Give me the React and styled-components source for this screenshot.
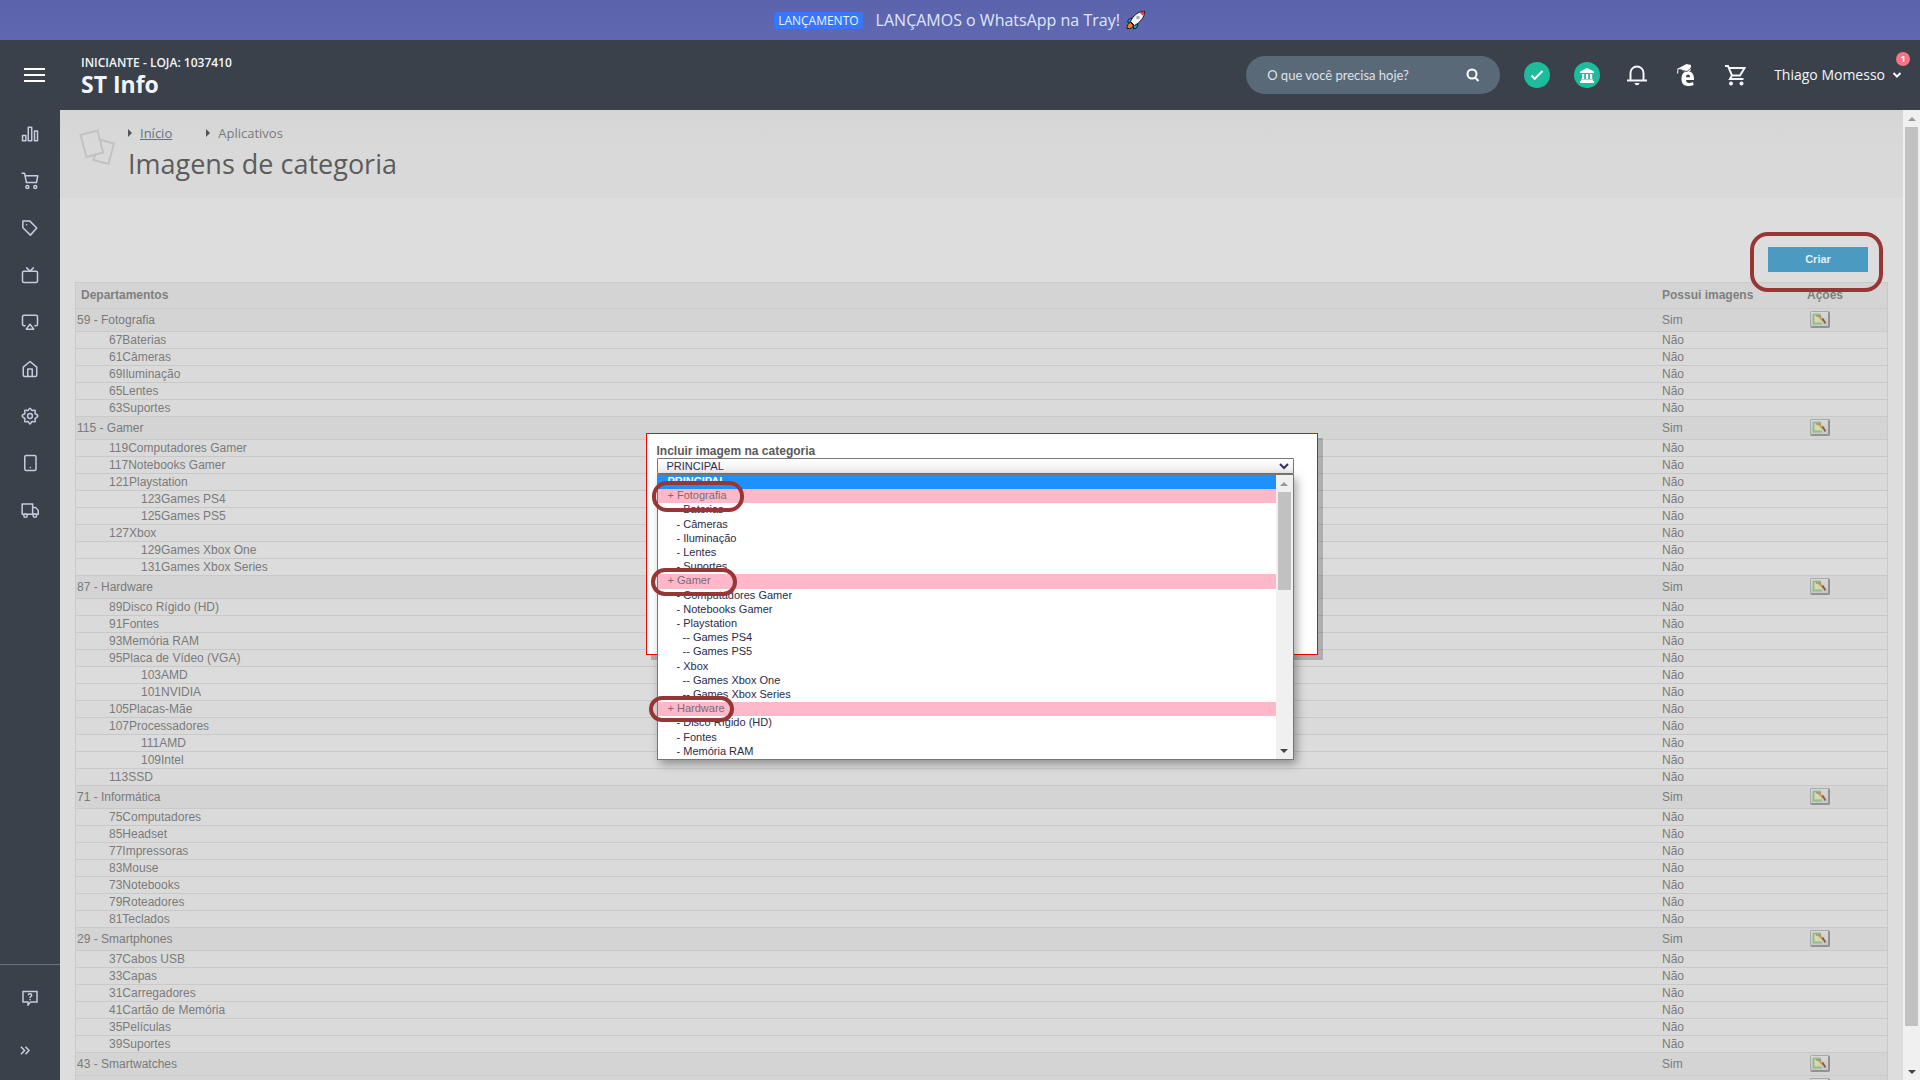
import React from "react";
import styled, { createGlobalStyle, css } from "styled-components";

const ui = `"Lato", "Open Sans", sans-serif`;
const arial = `"Liberation Sans", Arial, sans-serif`;
const open = `"Open Sans", "Noto Sans", sans-serif`;

const GlobalStyle = createGlobalStyle`
  *, *::before, *::after { box-sizing: border-box; }
  body { margin: 0; font-family: ${arial}; background: #ddd; }
  button, input, select { font: inherit; color: inherit; margin: 0; }
  button { cursor: pointer; }
`;

const Page = styled.div`
  display: flex;
  flex-direction: column;
  height: 100vh;
  overflow: hidden;
`;

/* Announcement strip */
const Banner = styled.div`
  flex: none;
  height: 40px;
  display: flex;
  align-items: center;
  justify-content: center;
  background: linear-gradient(#5c63ae, #6068b0);
  color: #dfe6fb;
  font: 500 16px/20px ${open};
  svg { margin-left: 6px; }
`;
const BannerTag = styled.span`
  margin-right: 13px;
  padding: 0 4px;
  border-radius: 3px;
  background: #3578fc;
  color: #eef3ff;
  font: 400 12px/17px ${open};
`;

/* Top bar */
const TopBar = styled.header`
  flex: none;
  height: 70px;
  display: flex;
  align-items: center;
  padding: 0 18px 0 24px;
  background: #3a414a;
  color: #f2f5f9;
  font-family: ${ui};
`;
const IconButton = styled.button`
  display: flex;
  align-items: center;
  justify-content: center;
  padding: 0;
  border: 0;
  background: none;
  color: ${(p) => p.$color || "#f2f5f9"};
`;
const Store = styled.div`
  margin-left: 36px;
  flex: 1;
`;
const StorePlan = styled.div`
  font: 600 12px/18px ${open};
`;
const StoreName = styled.div`
  font: 700 23px/24px ${open};
`;
const Search = styled.form`
  display: flex;
  align-items: center;
  width: 254px;
  height: 38px;
  padding: 0 20px 0 21px;
  border-radius: 19px;
  background: #5a6978;
  color: #dde2e8;
`;
const SearchInput = styled.input`
  flex: 1;
  min-width: 0;
  padding: 0;
  border: 0;
  outline: 0;
  background: none;
  font: 400 13px/20px ${ui};
  &::placeholder { color: #dde2e8; opacity: 1; }
`;
const Actions = styled.div`
  display: flex;
  align-items: center;
  gap: 24px;
  margin: 0 28px 0 24px;
`;
const ActionButton = styled(IconButton)`
  width: 26px;
  height: 26px;
`;
const RoundButton = styled(ActionButton)`
  border-radius: 50%;
  background: #1dbc9c;
  color: #fff;
`;
const UserButton = styled(IconButton)`
  position: relative;
  gap: 7px;
  font: 400 14px/20px ${open};
`;
const Badge = styled.span`
  position: absolute;
  right: -8px;
  top: -13px;
  width: 14px;
  height: 14px;
  border-radius: 50%;
  background: #f67485;
  color: #fff;
  font: 700 9px/14px ${open};
  text-align: center;
`;

/* Body */
const Body = styled.div`
  flex: 1;
  min-height: 0;
  display: flex;
`;
const SideBar = styled.nav`
  flex: none;
  width: 60px;
  display: flex;
  flex-direction: column;
  background: #3a414a;
`;
const SideLink = styled.a`
  flex: none;
  display: flex;
  align-items: center;
  justify-content: center;
  height: 47px;
  color: #c5ccde;
`;
const SideFoot = styled.div`
  margin-top: auto;
  border-top: 1px solid #6b727b;
  padding: 9px 0 1px;
`;
const FootLink = styled(SideLink)`
  height: ${(p) => p.$h}px;
  padding-right: ${(p) => p.$shift || 0}px;
`;
const Content = styled.main`
  position: relative;
  flex: 1;
  min-width: 0;
  overflow: hidden;
  background: #ddd;
  color: #7a7a7a;
`;
const PageHead = styled.div`
  display: flex;
  height: 88px;
  padding: 13px 19px;
  background: linear-gradient(#d5d5d5, #d9d9d9 40%);
  font-family: ${open};
  > svg { margin-top: 6px; }
`;
const HeadText = styled.div`
  padding-left: 12px;
`;
const Crumbs = styled.nav`
  display: flex;
  align-items: center;
  gap: 34px;
  font-size: 13px;
  line-height: 20px;
`;
const Crumb = styled.span`
  display: flex;
  align-items: center;
  gap: 8px;
  &::before {
    content: "";
    border: 4px solid transparent;
    border-left-color: #555;
    border-right: 0;
  }
  a { color: #66717f; }
`;
const Title = styled.h1`
  margin: 3px 0 0;
  font: 400 27px/36px ${open};
  color: #5c5c5c;
`;
const Section = styled.section`
  padding: 49px 15px 0;
`;
const Toolbar = styled.div`
  display: flex;
  justify-content: flex-end;
  padding: 0 20px 10px 0;
`;
const CreateButton = styled.button`
  position: relative;
  width: 100px;
  height: 25px;
  padding: 0;
  border: 0;
  background: #4a9ac2;
  color: #e4eef4;
  font: 700 11px/25px ${arial};
`;

/* Hand-marked outline drawn over whatever it surrounds */
const Mark = styled.span`
  position: absolute;
  z-index: 3;
  left: ${(p) => p.$x}px;
  top: ${(p) => p.$y}px;
  width: ${(p) => p.$w}px;
  height: ${(p) => p.$h}px;
  border: 4px solid #983535;
  border-radius: ${(p) => p.$r || 15}px;
  pointer-events: none;
`;

const Table = styled.table`
  width: 100%;
  border: 1px solid #c9c9c9;
  border-bottom: 0;
  border-collapse: separate;
  border-spacing: 0;
  table-layout: fixed;
  font: 400 12px/14px ${arial};
  th, td {
    padding: 0 0 0 3px;
    border-bottom: 1px solid #c9c9c9;
    text-align: left;
    vertical-align: middle;
    white-space: nowrap;
  }
  th {
    height: 26px;
    padding-bottom: 2px;
    background: #d4d4d4;
    color: #808080;
  }
  th:first-child { padding-left: 5px; }
  th:last-child { text-align: center; padding-left: 10px; }
  td:last-child { text-align: center; padding: 0 0 2px; }
`;
const Row = styled.tr`
  td {
    height: 17px;
    background: ${(p) => (p.$level === 2 ? "#dcdcdc" : "#dadada")};
  }
  td:first-child { padding-left: ${(p) => p.$level * 32 + 1}px; }
  ${(p) =>
    p.$level === 0 &&
    css`
      td { height: 23px; background: #d4d4d4; }
    `}
`;
const EditButton = styled.button`
  display: inline-flex;
  align-items: center;
  justify-content: center;
  width: 20px;
  height: 17px;
  padding: 0;
  vertical-align: middle;
  border: 1px solid #aaa;
  border-right: 2px solid #929292;
  border-bottom: 2px solid #929292;
  border-radius: 2px;
  background: linear-gradient(#d8d8d8, #c8c8c8);
`;

/* Include-image dialog */
const Layer = styled.div`
  position: absolute;
  inset: 0;
  display: flex;
  justify-content: center;
  align-items: flex-start;
  padding-top: 323px;
`;
const Dialog = styled.div`
  width: 672px;
  height: 222px;
  padding: 10px 23px 0 10px;
  border: 1px solid #f00;
  background: #fff;
  box-shadow: 5px 5px 0 rgba(0, 0, 0, 0.2);
`;
const DialogLabel = styled.label`
  display: block;
  font: 700 12px/14px ${arial};
  color: #5a5a5a;
`;
const Picker = styled.div`
  position: relative;
`;
const SelectBox = styled.div`
  position: relative;
  display: flex;
  svg { position: absolute; right: 5px; top: 5px; }
`;
const Select = styled.select`
  appearance: none;
  width: 100%;
  height: 16px;
  padding: 0 10px 0 9px;
  border: 1px solid #767676;
  border-radius: 1px;
  outline: 0;
  background: linear-gradient(#fff, #ececec);
  color: #2c2c54;
  font: 400 11px/14px ${arial};
`;
const Popup = styled.div`
  position: absolute;
  z-index: 2;
  left: 0;
  right: 0;
  top: 100%;
  display: flex;
  height: 286px;
  border: 1px solid #767676;
  background: #fff;
  box-shadow: 3px 4px 9px rgba(0, 0, 0, 0.35);
`;
const Options = styled.ul`
  flex: 1;
  display: grid;
  grid-auto-rows: 1fr;
  margin: 0;
  padding: 0;
  list-style: none;
`;
const Option = styled.li`
  position: relative;
  padding-left: ${(p) => [10, 19, 25][p.$level]}px;
  font: 400 11px/12px ${arial};
  color: #2b2b4b;
  ${(p) => p.$group && css`background: #ffb8ca; color: #7a6a72;`}
  ${(p) => p.$active && css`background: #1e90ff; color: #fff; font-weight: 700;`}
`;

const Bar = styled.div`
  flex: none;
  width: 17px;
  display: flex;
  flex-direction: column;
  align-items: center;
  background: #f0f0f0;
`;
const BarArrow = styled.span`
  flex: none;
  display: flex;
  align-items: center;
  height: 17px;
  &::before {
    content: "";
    border: 4px solid transparent;
    ${(p) =>
      p.$down
        ? css`border-top-color: #444; border-bottom: 0;`
        : css`border-bottom-color: #999; border-top: 0;`}
  }
`;
const Track = styled.div`
  flex: 1;
  width: 13px;
`;
const Thumb = styled.div`
  height: ${(p) => p.$size}%;
  background: #c1c1c1;
`;

function ScrollBar({ size }) {
  return (
    <Bar aria-hidden="true">
      <BarArrow />
      <Track>
        <Thumb $size={size} />
      </Track>
      <BarArrow $down />
    </Bar>
  );
}

function Line({ size = 20, w = 2, children }) {
  return (
    <svg width={size} height={size} viewBox="0 0 24 24" fill="none" stroke="currentColor" strokeWidth={w} strokeLinecap="round" strokeLinejoin="round" aria-hidden="true">
      {children}
    </svg>
  );
}

const sideItems = [
  ["Painel", <><path d="M2 14h4.500v7H2zM9.700 3h4.600v18H9.700zM18 8h4v13h-4z" /></>],
  ["Vendas", <><path d="M1.500 1.500h3.200l2.500 12.500h13.500l1.600-9H5.500" /><circle cx="8.500" cy="20" r="2" /><circle cx="19" cy="20" r="2" /></>],
  ["Produtos", <><path d="M2.500 2.500h9l9.500 9.500-8.500 9.500-10-9.800z" /><path d="M7.500 7.500h.1" /></>],
  ["Canais", <><rect x="2" y="7" width="20" height="15" rx="2" /><path d="M16.500 2.500 12 6.800 7.500 2.500" /></>],
  ["Marketing", <><path d="M5.500 17H4a2 2 0 0 1-2-2V5a2 2 0 0 1 2-2h16a2 2 0 0 1 2 2v10a2 2 0 0 1-2 2h-1.500" /><path d="m12 15 5 6.500H7z" /></>],
  ["Minha loja", <><path d="M3 9.500 12 2l9 7.500V20a2 2 0 0 1-2 2H5a2 2 0 0 1-2-2z" /><path d="M9 22V12h6v10" /></>],
  ["Configurações", <><circle cx="12" cy="12" r="3.200" /><path d="M12 1.500c1.300 0 1.600 2.600 2.800 3.100s3.200-1.100 4.100-.2-.7 2.900-.2 4.100 3.800 1.500 3.800 3.500-3.300 2.300-3.800 3.500 1.100 3.200.2 4.100-2.900-.7-4.100-.2-1.500 3.100-2.800 3.100-1.600-2.600-2.800-3.100-3.200 1.100-4.100.2.700-2.900.2-4.100S1.500 14 1.500 12s3.300-2.300 3.800-3.500-1.100-3.200-.2-4.100 2.900.7 4.100.2S10.700 1.500 12 1.500z" /></>],
  ["Aplicativos", <><rect x="5" y="2" width="15" height="20" rx="2" /><path d="M12.500 18h.1" /></>],
  ["Envios", <><path d="M1.500 4h14v13.500h-14zM15.500 8.500h4l3.500 4v5h-7.500z" /><circle cx="6" cy="19.500" r="2.300" fill="#3a414a" /><circle cx="18.500" cy="19.500" r="2.300" fill="#3a414a" /></>],
];

const rows = [
  [0, "59 - Fotografia"], [1, "67Baterias"], [1, "61Câmeras"], [1, "69Iluminação"], [1, "65Lentes"], [1, "63Suportes"],
  [0, "115 - Gamer"], [1, "119Computadores Gamer"], [1, "117Notebooks Gamer"], [1, "121Playstation"], [2, "123Games PS4"], [2, "125Games PS5"], [1, "127Xbox"], [2, "129Games Xbox One"], [2, "131Games Xbox Series"],
  [0, "87 - Hardware"], [1, "89Disco Rígido (HD)"], [1, "91Fontes"], [1, "93Memória RAM"], [1, "95Placa de Vídeo (VGA)"], [2, "103AMD"], [2, "101NVIDIA"], [1, "105Placas-Mãe"], [1, "107Processadores"], [2, "111AMD"], [2, "109Intel"], [1, "113SSD"],
  [0, "71 - Informática"], [1, "75Computadores"], [1, "85Headset"], [1, "77Impressoras"], [1, "83Mouse"], [1, "73Notebooks"], [1, "79Roteadores"], [1, "81Teclados"],
  [0, "29 - Smartphones"], [1, "37Cabos USB"], [1, "33Capas"], [1, "31Carregadores"], [1, "41Cartão de Memória"], [1, "35Películas"], [1, "39Suportes"],
  [0, "43 - Smartwatches"], [0, ""],
];

const options = [
  { t: "PRINCIPAL", level: 0, active: true },
  { t: "+ Fotografia", level: 0, group: true, mark: { $x: -6, $y: -8, $w: 92, $h: 31 } },
  { t: "- Baterias", level: 1 }, { t: "- Câmeras", level: 1 }, { t: "- Iluminação", level: 1 }, { t: "- Lentes", level: 1 }, { t: "- Suportes", level: 1 },
  { t: "+ Gamer", level: 0, group: true, mark: { $x: -7, $y: -6, $w: 86, $h: 28 } },
  { t: "- Computadores Gamer", level: 1 }, { t: "- Notebooks Gamer", level: 1 }, { t: "- Playstation", level: 1 },
  { t: "-- Games PS4", level: 2 }, { t: "-- Games PS5", level: 2 }, { t: "- Xbox", level: 1 },
  { t: "-- Games Xbox One", level: 2 }, { t: "-- Games Xbox Series", level: 2 },
  { t: "+ Hardware", level: 0, group: true, mark: { $x: -9, $y: -6, $w: 85, $h: 26 } },
  { t: "- Disco Rígido (HD)", level: 1 }, { t: "- Fontes", level: 1 }, { t: "- Memória RAM", level: 1 },
];

function Rocket() {
  return (
    <svg width="20" height="20" viewBox="0 0 20 20" aria-hidden="true">
      <path d="M1 18.500c0-3 1-5.500 3.500-6l3 3c-.5 2.500-3 3.500-6.500 3z" fill="#f47b20" stroke="#1b1b1b" />
      <path d="M6 8 2.500 9.500 1.500 12l4 .5zM12 14l-1.500 4-3 .8-.3-4z" fill="#19a9e5" stroke="#1b1b1b" />
      <path d="M4.500 11.500C7 6 11.500 1.500 18.500 1.200 19 7 14 12.500 8.500 15.500z" fill="#f4f4f4" stroke="#1b1b1b" />
      <path d="M13.500 2.500c1.500-.7 3-1 4.600-1 0 1.700-.2 3-.8 4.500z" fill="#e8384f" />
      <circle cx="12" cy="7.500" r="1.800" fill="#a8acb0" />
    </svg>
  );
}

function EditIcon() {
  return (
    <svg width="15" height="12" viewBox="0 0 15 12" aria-hidden="true">
      <path d="M1 1.500h8M1.500 1v9.500H10" fill="none" stroke="#94bf84" strokeWidth="2" />
      <path d="M3 3h7v6H3z" fill="#d6dab2" />
      <path d="M5.500 3.500h3.500l3 3.500-1.800 1.500z" fill="#cfa452" />
      <path d="M4 3h5" stroke="#8a7058" />
      <path d="m10.500 5.500 3 5" stroke="#77634f" strokeWidth="1.800" />
    </svg>
  );
}

export default function App() {
  return (
    <Page>
      <GlobalStyle />
      <Banner>
        <BannerTag>LANÇAMENTO</BannerTag>
        <span>LANÇAMOS o WhatsApp na Tray!</span>
        <Rocket />
      </Banner>

      <TopBar>
        <IconButton aria-label="Menu">
          <svg width="21" height="14" viewBox="0 0 21 14" aria-hidden="true">
            <path d="M0 1h21M0 7h21M0 13h21" stroke="#fff" strokeWidth="2" />
          </svg>
        </IconButton>
        <Store>
          <StorePlan>INICIANTE - LOJA: 1037410</StorePlan>
          <StoreName>ST Info</StoreName>
        </Store>
        <Search onSubmit={(e) => e.preventDefault()}>
          <SearchInput type="text" aria-label="Buscar" placeholder="O que você precisa hoje?" />
          <IconButton aria-label="Pesquisar">
            <svg width="14" height="14" viewBox="0 0 14 14" fill="none" stroke="#fff" strokeWidth="2" aria-hidden="true">
              <circle cx="6" cy="6" r="4.500" />
              <path d="m9 9.500 3.500 3.500" />
            </svg>
          </IconButton>
        </Search>
        <Actions>
          <RoundButton aria-label="Status">
            <svg width="14" height="12" viewBox="0 0 14 12" fill="none" stroke="#fff" strokeWidth="2" aria-hidden="true">
              <path d="m1.500 6.500 3.300 3.300L12.500 2" />
            </svg>
          </RoundButton>
          <RoundButton aria-label="Banco">
            <svg width="14" height="15" viewBox="0 0 14 15" fill="#fff" aria-hidden="true">
              <path d="M7 0 0 3.500V5h14V3.500zM2 6h2.200v5H2zM6 6h2.200v5H6zM10 6h2.200v5H10zM1 11.500h12V13H1zM0 13h14v2H0z" />
            </svg>
          </RoundButton>
          <ActionButton aria-label="Notificações">
            <svg width="22" height="22" viewBox="0 0 22 22" fill="none" stroke="currentColor" strokeWidth="2" aria-hidden="true">
              <path d="M1 16.500h20M4.500 16.500V9a6.500 6.500 0 0 1 13 0v7.500" />
              <path d="M8.500 19h5c-.5 3-4.500 3-5 0z" fill="currentColor" stroke="none" />
            </svg>
          </ActionButton>
          <ActionButton aria-label="Escola">
            <svg width="26" height="24" viewBox="0 0 26 24" aria-hidden="true">
              <path d="M13.800 23c-4.400 0-6.300-2.800-6.300-7.200s2.200-7.500 6.300-7.500 6.500 3.100 6.200 8.700h-8c.1 2 1.200 2.900 3 2.900 1.200 0 2.500-.2 4-1l.6 3c-1.500.8-3.500 1.100-5.800 1.100zM12 14.200h4c0-1.600-.6-2.600-1.900-2.600s-2 1-2.100 2.600z" fill="#fff" />
              <path d="m4 5.500 8.500-4.500 4.500 1-.5 5.500-2 1.500-6-1-1.500-2.500z" fill="#fff" />
              <path d="m4 5.500 7 1 6-4M4 5.500l-.4 5" fill="none" stroke="#fff" />
              <path d="m7 7 6 1.500L17 5" fill="none" stroke="#3a414a" strokeWidth=".8" />
            </svg>
          </ActionButton>
          <IconButton aria-label="Carrinho">
            <svg width="22" height="22" viewBox="0 0 22 22" fill="none" stroke="currentColor" strokeWidth="2" aria-hidden="true">
              <path d="M1 2h3l4 9.500h8L20.500 4H5M8 11.500 6 15h13.500" />
              <circle cx="7" cy="19.500" r="2" fill="currentColor" stroke="none" />
              <circle cx="17.500" cy="19.500" r="2" fill="currentColor" stroke="none" />
            </svg>
          </IconButton>
        </Actions>
        <UserButton>
          Thiago Momesso
          <svg width="10" height="8" viewBox="0 0 10 8" fill="none" stroke="currentColor" strokeWidth="2" aria-hidden="true">
            <path d="M1.500 2 5 5.500 8.500 2" />
          </svg>
          <Badge>1</Badge>
        </UserButton>
      </TopBar>

      <Body>
        <SideBar>
          {sideItems.map(([name, icon]) => (
            <SideLink key={name} href="#" aria-label={name}>
              <Line size={18}>{icon}</Line>
            </SideLink>
          ))}
          <SideFoot>
            <FootLink href="#" aria-label="Ajuda" $h={47}>
              <svg width="16" height="16" viewBox="0 0 16 16" fill="none" stroke="currentColor" strokeWidth="1.500" aria-hidden="true">
                <path d="M1 1.500h14v10.500H8.500L6 15v-3H1z" />
                <path d="M6.300 5.200c0-2 3.400-2 3.400 0C9.700 6.500 8 6.300 8 8M8 9v1.300" />
              </svg>
            </FootLink>
            <FootLink href="#" aria-label="Expandir menu" $h={58} $shift={10}>
              <svg width="10" height="9" viewBox="0 0 10 9" fill="none" stroke="currentColor" strokeWidth="1.600" aria-hidden="true">
                <path d="m1 .8 3.500 3.700L1 8.200M5.500.8 9 4.500 5.500 8.200" />
              </svg>
            </FootLink>
          </SideFoot>
        </SideBar>

        <Content>
          <PageHead>
            <svg width="37" height="37" viewBox="0 0 37 37" fill="none" stroke="#c2c2c2" strokeWidth="2" aria-hidden="true">
              <path d="M1.500 6 18.500 1.500l5.500 22L7.500 28z" />
              <path d="m22 11 13 3.500-5.500 20.500L14.500 31l1.500-5" />
            </svg>
            <HeadText>
              <Crumbs aria-label="Trilha">
                <Crumb><a href="#">Início</a></Crumb>
                <Crumb>Aplicativos</Crumb>
              </Crumbs>
              <Title>Imagens de categoria</Title>
            </HeadText>
          </PageHead>

          <Section>
            <Toolbar>
              <CreateButton>
                Criar
                <Mark $x={-18} $y={-15} $w={133} $h={60} $r={18} />
              </CreateButton>
            </Toolbar>
            <Table>
              <colgroup>
                <col />
                <col style={{ width: 94 }} />
                <col style={{ width: 134 }} />
              </colgroup>
              <thead>
                <tr>
                  <th scope="col">Departamentos</th>
                  <th scope="col">Possui imagens</th>
                  <th scope="col">Ações</th>
                </tr>
              </thead>
              <tbody>
                {rows.map(([level, name], i) => (
                  <Row key={i} $level={level}>
                    <td>{name}</td>
                    <td>{level ? "Não" : name && "Sim"}</td>
                    <td>
                      {level === 0 && (
                        <EditButton aria-label="Editar imagem">
                          <EditIcon />
                        </EditButton>
                      )}
                    </td>
                  </Row>
                ))}
              </tbody>
            </Table>
          </Section>

          <Layer>
            <Dialog role="dialog" aria-labelledby="categoria-label">
              <DialogLabel id="categoria-label" htmlFor="categoria">Incluir imagem na categoria</DialogLabel>
              <Picker>
                <SelectBox>
                  <Select id="categoria" defaultValue="PRINCIPAL">
                    <option>PRINCIPAL</option>
                  </Select>
                  <svg width="10" height="7" viewBox="0 0 10 7" fill="none" stroke="#33335c" strokeWidth="2" aria-hidden="true">
                    <path d="m1 1 4 4 4-4" />
                  </svg>
                </SelectBox>
                <Popup>
                  <Options role="listbox" aria-label="Categorias">
                    {options.map((o) => (
                      <Option key={o.t} role="option" aria-selected={!!o.active} $level={o.level} $group={o.group} $active={o.active}>
                        {o.t}
                        {o.mark && <Mark {...o.mark} />}
                      </Option>
                    ))}
                  </Options>
                  <ScrollBar size={39} />
                </Popup>
              </Picker>
            </Dialog>
          </Layer>
        </Content>
        <ScrollBar size={96} />
      </Body>
    </Page>
  );
}
